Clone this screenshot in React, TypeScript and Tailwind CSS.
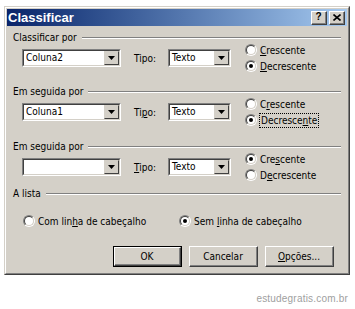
import React from 'react';

const FONT = { fontFamily: '"DejaVu Sans Condensed", "Liberation Sans", Arial, sans-serif' };
const TITLE_FONT = { fontFamily: '"Liberation Sans", Arial, sans-serif' };

function Acc({ text, i }: { text: string; i?: number }) {
  if (i === undefined) return <span>{text}</span>;
  return (
    <span>
      {text.slice(0, i)}
      <span className="underline underline-offset-[1px]">{text[i]}</span>
      {text.slice(i + 1)}
    </span>
  );
}

function Groove({ label }: { label: string }) {
  return (
    <div className="flex h-[13px] items-center">
      <span className="leading-[13px]">{label}</span>
      <div className="ml-[5px] flex-1 border-t border-b border-t-[#808080] border-b-white" />
    </div>
  );
}

function Radio({ checked }: { checked?: boolean }) {
  return (
    <span className="flex h-[12px] w-[12px] shrink-0 items-center justify-center rounded-full border border-t-[#808080] border-l-[#808080] border-b-white border-r-white">
      <span className="flex h-[10px] w-[10px] items-center justify-center rounded-full border border-t-[#404040] border-l-[#404040] border-b-[#d4d0c8] border-r-[#d4d0c8] bg-white">
        {checked && <span className="h-[4px] w-[4px] rounded-full bg-black" />}
      </span>
    </span>
  );
}

function RadioItem({
  text,
  i,
  checked,
  focus,
}: {
  text: string;
  i?: number;
  checked?: boolean;
  focus?: boolean;
}) {
  return (
    <div className="flex h-[16px] items-center">
      <Radio checked={checked} />
      <span
        className={
          focus
            ? 'ml-[2px] border border-dotted border-black px-[1px] leading-[13px]'
            : 'ml-[3px] leading-[13px]'
        }
      >
        <Acc text={text} i={i} />
      </span>
    </div>
  );
}

function Combo({ value, width }: { value: string; width: string }) {
  return (
    <div
      className={`flex h-[18px] ${width} border border-t-[#808080] border-l-[#808080] border-b-white border-r-white`}
    >
      <div className="flex flex-1 border border-t-[#404040] border-l-[#404040] border-b-[#d4d0c8] border-r-[#d4d0c8] bg-white">
        <span className="flex-1 pl-[2px] leading-[14px]">{value}</span>
        <div className="flex w-[15px] items-center justify-center border border-t-[#d4d0c8] border-l-[#d4d0c8] border-b-[#404040] border-r-[#404040] bg-[#d4d0c8]">
          <svg width="7" height="4" viewBox="0 0 7 4">
            <path d="M0 0h7L3.5 4z" fill="#000" />
          </svg>
        </div>
      </div>
    </div>
  );
}

function SortRow({
  value,
  tipoI,
  cres,
  dec,
  checkedTop,
  focusDec,
}: {
  value: string;
  tipoI?: number;
  cres: number;
  dec: number;
  checkedTop?: boolean;
  focusDec?: boolean;
}) {
  return (
    <div className="flex h-[28px] items-center pl-[9px]">
      <Combo value={value} width="w-[99px]" />
      <span className="ml-[13px] w-[34px]">
        <Acc text="Tipo:" i={tipoI} />
      </span>
      <Combo value="Texto" width="w-[63px]" />
      <div className="ml-[14px] flex flex-col">
        <RadioItem text="Crescente" i={cres} checked={checkedTop} />
        <RadioItem text="Decrescente" i={dec} checked={!checkedTop} focus={focusDec} />
      </div>
    </div>
  );
}

function Button({ children, def }: { children: React.ReactNode; def?: boolean }) {
  return (
    <div className={def ? 'h-[21px] w-[69px] border border-black' : 'h-[21px] w-[69px]'}>
      <div className="flex h-full w-full border border-t-white border-l-white border-b-[#404040] border-r-[#404040]">
        <div className="flex flex-1 items-center justify-center border-r border-b border-r-[#808080] border-b-[#808080]">
          {children}
        </div>
      </div>
    </div>
  );
}

function TitleButton({ children }: { children: React.ReactNode }) {
  return (
    <div className="flex h-[14px] w-[16px] border border-t-white border-l-white border-b-[#404040] border-r-[#404040] bg-[#d4d0c8]">
      <div className="flex flex-1 items-center justify-center border-r border-b border-r-[#808080] border-b-[#808080]">
        {children}
      </div>
    </div>
  );
}

export default function App() {
  return (
    <div className="h-[309px] w-[355px] bg-white pl-[4px] pt-[6px] text-[10px] text-black" style={FONT}>
      <div className="h-[269px] w-[346px] border border-t-[#d4d0c8] border-l-[#d4d0c8] border-b-[#404040] border-r-[#404040]">
        <div className="flex h-full flex-col border border-t-white border-l-white border-b-[#808080] border-r-[#808080] bg-[#d4d0c8] p-[1px]">
          <div className="flex h-[17px] items-center bg-gradient-to-r from-[#0a246a] to-[#a6caf0] pl-[1px] pr-[2px]">
            <span className="flex-1 text-[13px] font-bold leading-[17px] text-white" style={TITLE_FONT}>
              Classificar
            </span>
            <TitleButton>
              <span className="text-[10px] font-bold leading-[10px]" style={TITLE_FONT}>?</span>
            </TitleButton>
            <div className="ml-[2px]">
              <TitleButton>
                <svg width="8" height="7" viewBox="0 0 8 7">
                  <path d="M0.5 0.5L7.5 6.5M7.5 0.5L0.5 6.5" stroke="#000" strokeWidth="1.6" />
                </svg>
              </TitleButton>
            </div>
          </div>

          <div className="flex flex-1 flex-col px-[6px]">
            <div className="mt-[5px]">
              <Groove label="Classificar por" />
            </div>
            <SortRow value="Coluna2" cres={0} dec={0} />

            <div className="mt-[13px]">
              <Groove label="Em seguida por" />
            </div>
            <SortRow value="Coluna1" tipoI={2} cres={1} dec={8} focusDec />

            <div className="mt-[14px]">
              <Groove label="Em seguida por" />
            </div>
            <SortRow value="" tipoI={0} cres={3} dec={1} checkedTop />

            <div className="mt-[6px]">
              <Groove label="A lista" />
            </div>
            <div className="mt-[13px] flex h-[16px] items-center pl-[10px]">
              <div className="w-[156px]">
                <RadioItem text="Com linha de cabeçalho" i={7} />
              </div>
              <RadioItem text="Sem linha de cabeçalho" i={4} checked />
            </div>

            <div className="mt-[17px] flex justify-end gap-[7px] pr-[7px]">
              <Button def>OK</Button>
              <Button>Cancelar</Button>
              <Button>
                <Acc text="Opções..." i={0} />
              </Button>
            </div>
          </div>
        </div>
      </div>
      <div className="mt-[16px] pr-[7px] text-right text-[10px] tracking-[0.2px] text-[#a0a0a0]" style={TITLE_FONT}>
        estudegratis.com.br
      </div>
    </div>
  );
}
